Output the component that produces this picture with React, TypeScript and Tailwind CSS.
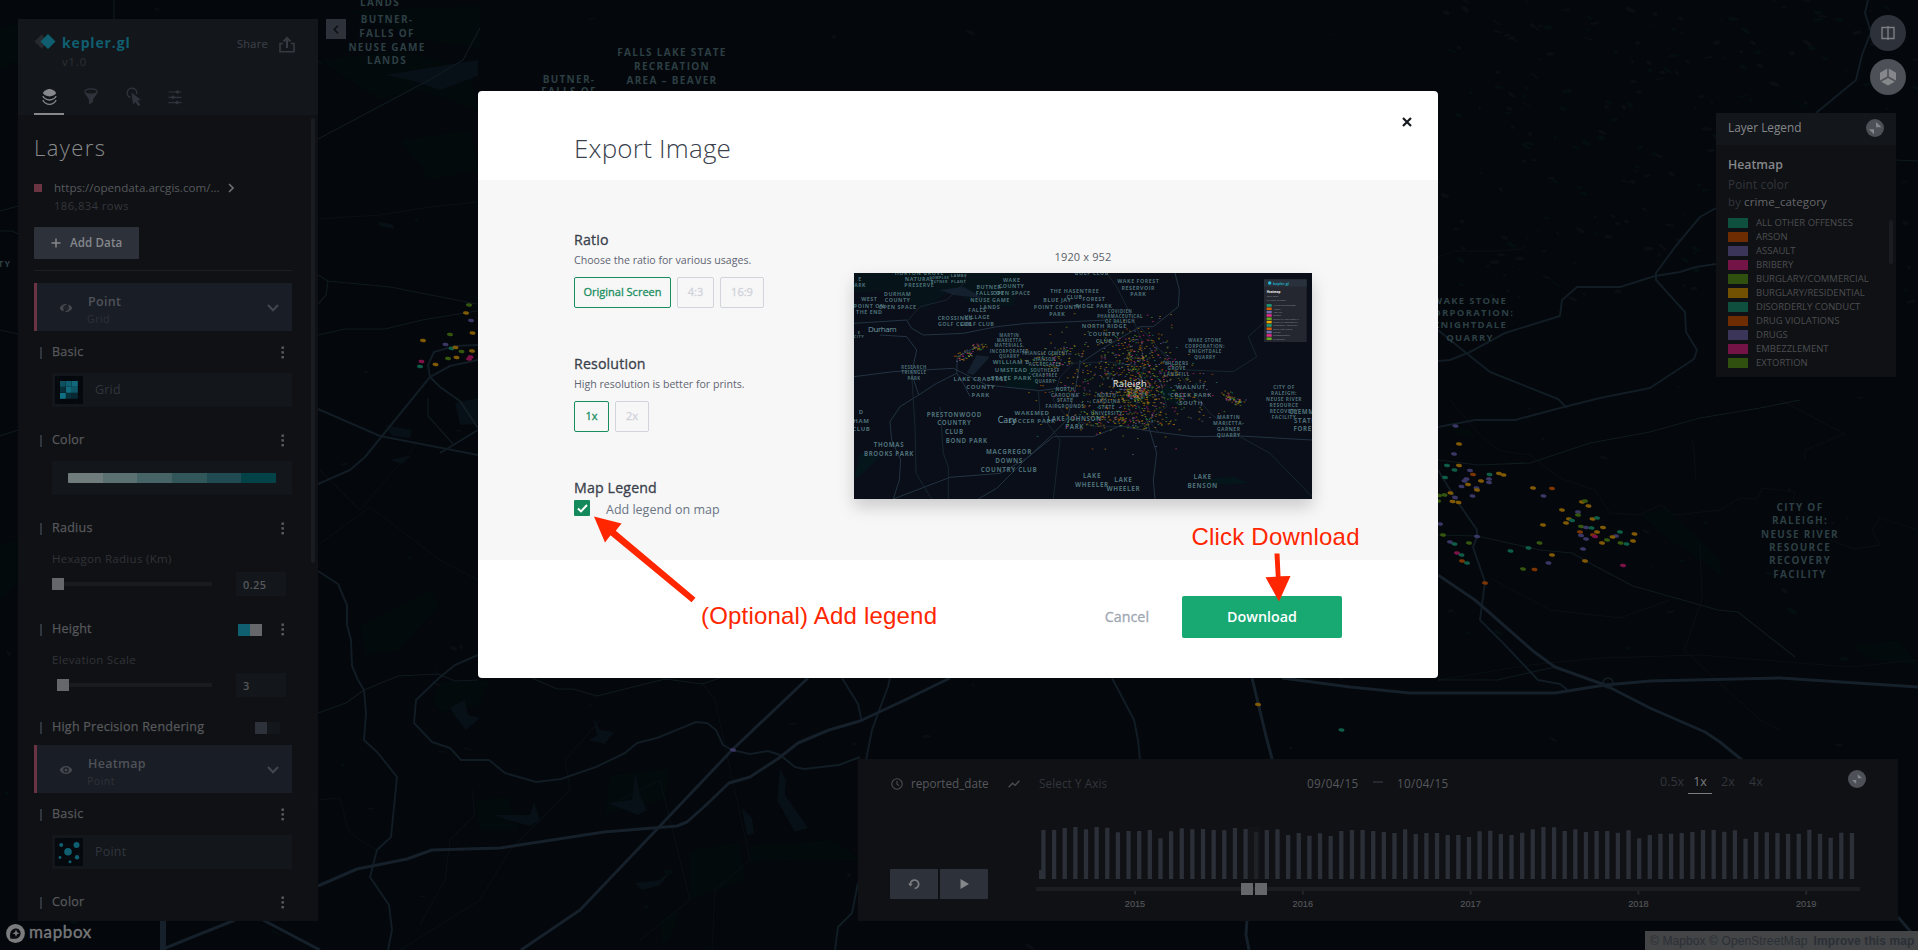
import React from "react";

const GREEN = "#0f5c47";
const ORANGE = "#7a3503";
const PURPLE = "#3a3765";
const PINK = "#7d1249";
const LIME = "#34560f";
const AMBER = "#7f5903";

/* ---------- Map ---------- */

const majorRoads = [
  "318,886 357,869 407,859 432,850 500,848 604,832 677,826 687,822 705,806 729,783 750,777 779,758 798,743 829,730 860,721 905,700 950,678",
  "808,678 732,750 659,827 580,910 521,950",
  "235,920 163,949",
  "263,920 320,950",
  "1252,678 1267,740 1273,762",
  "1247,920 1246,935 1249,950",
  "1282,678 1350,687 1410,693 1555,693 1605,685 1650,681 1780,678 1918,687",
  "1438,575 1475,600 1500,622 1533,651 1555,667 1605,685 1650,708 1705,732 1720,742 1742,760",
  "1898,917 1918,940",
];
const midRoads = [
  "358,680 364,690 366,713 364,740 378,753 397,777 391,837 377,850 370,877 389,905 392,930 388,950",
  "478,655 455,665 439,678 416,700 414,723 432,742 450,748 461,760 489,760 505,773 536,782 561,779 596,767 625,753 637,743 657,738 696,722 707,723 716,730 723,745 732,750 750,754 768,751 780,755 795,767 804,769 839,765 860,757",
  "318,409 380,436 478,455",
  "318,484 350,470 365,457 430,377 450,366 478,360",
  "430,377 428,365 434,352 455,346 478,345",
  "430,377 440,387 460,401 478,428",
  "478,430 440,453",
  "318,571 338,584 347,605 347,625 351,640 352,666 358,680",
  "842,678 858,704 862,722",
  "890,678 888,687 883,700 872,730 866,760",
  "1112,678 1134,720 1138,740 1140,760",
  "1438,427 1475,420 1515,420 1560,408 1600,398 1650,388 1694,359 1697,350 1686,332 1685,312 1656,280 1656,273 1675,247 1700,217 1716,208",
  "1438,361 1450,360 1470,352 1505,333 1560,316 1562,300 1577,287 1620,287 1655,276 1680,272 1696,267 1716,264",
  "1438,330 1465,352 1490,372 1558,399 1567,408",
  "1868,0 1865,13 1871,32 1862,55 1856,80 1816,113",
  "858,883 852,913 838,927 835,950",
  "1438,470 1455,498 1477,530 1477,537 1473,547 1485,582 1480,620 1505,645 1538,680 1560,684 1570,692",
];
const thinRoads = [
  "114,0 114,19",
  "0,211 18,206",
  "0,231 12,231 18,234",
  "0,330 18,334",
  "0,436 18,430",
  "318,139 433,78 463,60 480,28",
  "318,275 328,281 390,287 477,304",
  "328,281 326,295 318,304",
  "318,335 345,329 385,329 422,320 477,311",
  "318,713 346,703 364,690 398,676 438,674 455,681 478,680",
  "532,678 557,689 573,689 597,696 665,679 702,684 720,678",
  "428,398 428,416 453,444",
  "1438,460 1478,465 1530,463 1590,443 1650,432 1700,418 1760,408 1800,400",
  "1438,535 1477,536 1540,550 1572,553 1595,566 1633,586 1718,610 1738,612 1795,657",
  "1438,680 1497,680 1555,667",
  "1896,160 1918,161",
];
const faintRoads = [
  "318,219 380,215 430,207 477,202",
  "1438,257 1455,251 1500,251 1520,249 1526,246",
  "1450,400 1480,435 1500,451 1530,455 1560,478 1595,490 1610,513 1640,515 1660,505 1675,515 1720,510 1740,498 1757,499 1762,488 1795,492 1793,500 1830,540 1855,549 1880,545 1872,530 1880,518 1918,530",
  "1490,578 1550,610 1620,618 1670,600",
  "1438,680 1530,665 1600,658 1700,655 1850,667 1918,660",
  "1696,480 1694,450 1692,440",
  "1700,545 1702,600 1684,650 1760,720 1780,730",
  "1805,460 1805,450 1845,434 1780,400",
  "318,800 340,798 348,830 360,840 377,850",
  "620,800 660,780 690,900 640,940",
  "472,790 475,815 450,840 445,880 420,925",
  "600,720 565,760 570,790 510,850 480,900 400,950",
  "318,545 370,507 440,560 478,580",
  "320,470 360,510 420,440",
  "700,680 715,700 750,860 715,890 712,950",
];

const parks = [
  "318,60 400,50 470,70 478,110 420,90 380,100",
  "400,140 470,130 478,170 430,180",
  "350,10 480,6 480,48 420,40",
  "440,682 490,680 480,705 440,712 432,700",
  "610,775 670,768 665,800 605,815",
  "475,800 508,797 520,830 480,830",
  "690,850 740,842 745,880 690,900",
  "750,845 835,840 860,860 750,862",
  "0,545 18,540 18,585 0,600",
  "1640,515 1665,508 1690,530 1720,560 1722,578 1700,560 1670,540",
  "1850,645 1900,640 1918,665 1870,660",
  "1440,420 1470,430 1480,438 1460,436",
  "0,30 18,22 18,60 0,70",
  "660,920 680,910 670,940 662,945",
  "360,625 430,590 440,605 400,650 365,655",
  "1790,100 1815,107 1800,108",
];

const lakes = [
  "385,75 440,66 478,60 478,76 440,90 410,80",
  "460,702 465,700 468,715 480,718 466,730 455,716 450,708",
  "593,716 600,730 614,732 605,744 588,740 597,736",
  "635,772 640,795 647,810 638,815 607,803 632,800",
  "493,815 530,815 534,802 540,820 530,826 508,820",
  "780,768 786,780 785,795 808,828 795,832 777,800",
  "742,808 752,818 754,834 747,835",
  "635,883 660,880 675,866 660,885 642,890",
  "378,222 392,224 395,229 380,226",
  "390,460 412,455 402,464",
  "385,425 412,430 410,438 392,436",
  "455,403 478,398 478,424 460,425",
];

function rng(seed: number) {
  let s = seed;
  return () => {
    s = (s * 1664525 + 1013904223) % 4294967296;
    return s / 4294967296;
  };
}

const speckRand = rng(42);
const specks = Array.from({ length: 420 }, () => {
  const upper = speckRand() < 0.62;
  return {
    x: upper ? 1438 + speckRand() * 480 : speckRand() * 1918,
    y: upper ? speckRand() * 300 : speckRand() * 950,
    w: 1.5 + speckRand() * 4,
    h: 0.7 + speckRand() * 1.6,
    g: speckRand() < 0.4,
  };
});

const dots: [number, number, string][] = [
  [1455.5, 426, PURPLE], [1459, 444, AMBER], [1454, 454, PURPLE], [1447, 465.5, GREEN], [1459, 465.5, AMBER],
  [1454.5, 470, GREEN], [1470, 470.5, PURPLE], [1473, 474.5, ORANGE], [1489.5, 474.5, GREEN], [1499, 473.5, AMBER],
  [1503.5, 475, AMBER], [1445, 477.5, GREEN], [1466.5, 479, PURPLE], [1464.5, 481, PURPLE], [1481, 481, AMBER],
  [1489, 479, PURPLE], [1489, 482.5, PURPLE], [1468, 484.5, AMBER], [1461.5, 486.5, PURPLE], [1476.5, 488, PURPLE],
  [1477, 490, AMBER], [1472.5, 496, PURPLE], [1450.5, 493, AMBER], [1444.5, 495, LIME], [1455, 497.5, PURPLE],
  [1452.5, 501.5, AMBER], [1458.5, 502.5, AMBER], [1439, 495.5, LIME], [1438, 501, LIME], [1533, 488, AMBER],
  [1552, 488.5, ORANGE], [1543.5, 496, PURPLE], [1582, 502, AMBER], [1585, 501, LIME], [1588.5, 506, AMBER],
  [1562, 510, AMBER], [1578, 512, PURPLE], [1578, 515, LIME], [1569, 519, AMBER], [1572, 520.5, GREEN],
  [1566, 523, AMBER], [1592.5, 519, AMBER], [1597, 518, GREEN], [1543, 525, AMBER], [1581, 526.5, LIME],
  [1586, 527.5, PURPLE], [1591.5, 528, GREEN], [1603, 527.5, AMBER], [1597, 532, AMBER], [1580, 532, ORANGE],
  [1581, 535.5, PURPLE], [1593, 535, ORANGE], [1595, 536.5, PINK], [1586, 539, PURPLE], [1620, 532, GREEN],
  [1634.5, 534, AMBER], [1616, 536, PURPLE], [1612.5, 537, AMBER], [1607, 540, LIME], [1602, 543, AMBER],
  [1620.5, 543, LIME], [1626.5, 544, GREEN], [1633, 541, AMBER], [1583, 549, PURPLE], [1440, 524, PURPLE],
  [1443, 535, LIME], [1477, 536.5, PURPLE], [1450, 542, PURPLE], [1454.5, 544, GREEN], [1469, 543, LIME],
  [1539.5, 543, LIME], [1528.5, 548, GREEN], [1510.5, 551, GREEN], [1552, 555, AMBER], [1548.5, 563, PURPLE],
  [1585, 561, AMBER], [1623, 565.5, PINK], [1457, 553, PINK], [1461.5, 555, GREEN], [1462, 561, ORANGE],
  [1467, 563, GREEN], [1523, 569, LIME], [1534.5, 569.5, ORANGE], [1485, 583, ORANGE],
  [1258, 704.5, AMBER], [1341.5, 730, GREEN], [733, 750, PURPLE],
  [469, 305, LIME], [466, 313, AMBER], [423, 340.5, AMBER], [450, 334.5, LIME], [472.5, 333, AMBER], [471, 320.5, PURPLE],
  [445.5, 344.5, PURPLE], [451.5, 348.5, GREEN], [455.5, 347.5, AMBER], [461.5, 351.5, LIME], [472, 351, AMBER],
  [421.5, 361.5, PINK], [420, 366.5, GREEN], [435.5, 364.5, AMBER], [448, 358.5, LIME], [456.5, 357.5, AMBER],
  [469, 359, PINK], [470.5, 357, PINK],
];

function Label({ x, y, lines, size = 10, gap = 13.5 }: { x: number; y: number; lines: string[]; size?: number; gap?: number }) {
  return (
    <text x={x} textAnchor="middle" fontSize={size} fontWeight={700} letterSpacing={1.3} fill="#2c3f44">
      {lines.map((l, i) => (
        <tspan key={i} x={x} y={y + i * gap}>{l}</tspan>
      ))}
    </text>
  );
}

function BaseMap() {
  return (
    <svg className="absolute inset-0 h-[950px] w-[1918px]" viewBox="0 0 1918 950">
      <rect width="1918" height="950" fill="#04070b" />
      {parks.map((p, i) => <polygon key={i} points={p} fill="#030a0c" />)}
      {lakes.map((p, i) => <polygon key={i} points={p} fill="#081017" />)}
      {specks.map((s, i) => (
        <ellipse key={i} cx={s.x} cy={s.y} rx={s.w} ry={s.h} fill={s.g ? "#040e10" : "#0a0e14"} transform={`rotate(${(i % 7) * 8 - 10} ${s.x} ${s.y})`} />
      ))}
      <g fill="none" strokeLinejoin="round">
        {faintRoads.map((p, i) => <polyline key={i} points={p} stroke="#091014" strokeWidth="1" />)}
        {thinRoads.map((p, i) => <polyline key={i} points={p} stroke="#0f1a20" strokeWidth="1.2" />)}
        {midRoads.map((p, i) => <polyline key={i} points={p} stroke="#111c24" strokeWidth="2" />)}
        {majorRoads.map((p, i) => <polyline key={i} points={p} stroke="#15202a" strokeWidth="3" />)}
        <polyline points="163,920 163,950" stroke="#15202a" strokeWidth="6" />
        <circle cx="1608" cy="683" r="5" stroke="#131e27" strokeWidth="1.6" />
      </g>
      {dots.map(([x, y, c], i) => <ellipse key={i} cx={x} cy={y} rx="3" ry="1.7" fill={c} transform={`rotate(10 ${x} ${y})`} />)}
      <g fontFamily="'Open Sans', 'Noto Sans', sans-serif">
        <Label x={380} y={6} lines={["LANDS"]} />
        <Label x={387} y={23} lines={["BUTNER-", "FALLS OF", "NEUSE GAME", "LANDS"]} gap={13.8} />
        <Label x={569} y={83} lines={["BUTNER-", "FALLS OF"]} gap={12} />
        <Label x={672} y={56} lines={["FALLS LAKE STATE", "RECREATION", "AREA – BEAVER"]} gap={13.8} />
        <Label x={1470} y={304} lines={["WAKE STONE", "CORPORATION:", "KNIGHTDALE", "QUARRY"]} gap={12.2} size={9.5} />
        <Label x={1800} y={511} lines={["CITY OF", "RALEIGH:", "NEUSE RIVER", "RESOURCE", "RECOVERY", "FACILITY"]} gap={13.3} />
        <Label x={-1} y={267} lines={["CITY"]} size={9} />
      </g>
    </svg>
  );
}

/* ---------- Sidebar ---------- */

function MoreDots() {
  return (
    <svg className="h-[13px] w-[3px]" viewBox="0 0 3 13" fill="#5b5d62">
      <rect x="0.5" y="0.5" width="2.4" height="2.4" />
      <rect x="0.5" y="5.2" width="2.4" height="2.4" />
      <rect x="0.5" y="10" width="2.4" height="2.4" />
    </svg>
  );
}

function SectionTitle({ title, children }: { title: string; children?: React.ReactNode }) {
  return (
    <div className="flex h-[42px] shrink-0 items-center pt-px pr-[8px] pl-[6px]">
      <div className="h-[12px] w-[2px] bg-[#30363e]" />
      <div className="ml-[10px] flex-1 text-[12.5px] tracking-[0.25px] text-[#56585c] [-webkit-text-stroke:0.25px_#56585c]">{title}</div>
      {children ?? <MoreDots />}
    </div>
  );
}

function LayerCard({ name, type, hidden }: { name: string; type: string; hidden?: boolean }) {
  return (
    <div className="flex h-[48px] shrink-0 items-center border-l-[3px] border-[#6b3442] bg-[#191d25] pr-[13px] pl-[22px]">
      <svg className="mt-px h-[14px] w-[14px]" viewBox="0 0 14 14" fill="#45484e">
        <path fillRule="evenodd" d="M7 3 C10 3 12.4 5 13.4 7 C12.4 9.2 10 11 7 11 C4 11 1.6 9.2 0.6 7 C1.6 5 4 3 7 3 Z M7 4.2 A2.8 2.8 0 1 0 7 9.8 A2.8 2.8 0 1 0 7 4.2 Z" />
        <circle cx="7" cy="7" r="1.5" />
        {hidden && <path d="M9.6 1.5 L4.4 12.5" stroke="#191d25" strokeWidth="1.8" />}
      </svg>
      <div className="ml-[14px] flex flex-1 flex-col pt-[6px]">
        <span className="h-[18px] pl-[1px] text-[12.5px] leading-[18px] font-semibold tracking-[0.3px] text-[#505259]">{name}</span>
        <span className="h-[17px] text-[10.5px] leading-[17px] tracking-[0.5px] text-[#2e323a]">{type}</span>
      </div>
      <svg className="mt-px h-[8px] w-[12px]" viewBox="0 0 12 8" fill="none" stroke="#434750" strokeWidth="2"><path d="M1 1 L6 6.3 L11 1" /></svg>
    </div>
  );
}

function GridIcon() {
  const c = ["#0d5161", "#0f5f70", "#12697c", "#08303b", "#12697c", "#0f5767", "#107083", "#08303b", "#082833"];
  return (
    <svg className="h-[28px] w-[28px]" viewBox="0 0 28 28">
      <rect width="28" height="28" fill="#05080c" />
      <path d="M3 0V28M0 21H28M22 0V28" stroke="#0a1015" strokeWidth="0.8" />
      {c.map((f, i) => <rect key={i} x={5 + (i % 3) * 6} y={5 + Math.floor(i / 3) * 6} width="5.8" height="5.8" fill={f} />)}
    </svg>
  );
}

function PointIcon() {
  return (
    <svg className="h-[28px] w-[28px]" viewBox="0 0 28 28">
      <rect width="28" height="28" fill="#05080c" />
      <path d="M3 0V28M0 20H28M24 0V28M0 7H28" stroke="#0b1117" strokeWidth="0.8" />
      <g fill="#0f5f70">
        <circle cx="13" cy="13.8" r="3.8" />
        <circle cx="21.5" cy="7" r="3" />
        <circle cx="6.2" cy="7" r="2" />
        <circle cx="22" cy="19.2" r="2.2" />
        <circle cx="5" cy="19.5" r="1.4" />
        <circle cx="15" cy="23.7" r="1.5" />
      </g>
    </svg>
  );
}

function TypeBox({ icon, label }: { icon: React.ReactNode; label: string }) {
  return (
    <div className="mb-[12px] ml-[18px] flex h-[34px] shrink-0 items-center rounded-[1px] bg-[#13161a] pl-[3px]">
      {icon}
      <span className="ml-[12px] text-[12.5px] tracking-[0.2px] text-[#31353d]">{label}</span>
    </div>
  );
}

function SliderRow({ label, value, atStart }: { label: string; value: string; atStart?: boolean }) {
  return (
    <div className="mb-[12px] ml-[18px] flex shrink-0 flex-col gap-[3px]">
      <div className="h-[20px] text-[11.5px] leading-[20px] tracking-[0.3px] text-[#303339]">{label}</div>
      <div className="flex h-[24px] items-center">
        <div className="flex w-[160px] items-center">
          {!atStart && <div className="w-[5px]" />}
          <div className="h-[12px] w-[12px] bg-[#65676b]" />
          <div className="h-[4px] flex-1 bg-[#191b1f]" />
        </div>
        <div className="ml-[24px] flex h-[24px] w-[50px] items-center rounded-[1px] bg-[#13161a] pt-[2px] pl-[7px] text-[11px] font-semibold tracking-[0.4px] text-[#56585c]">{value}</div>
      </div>
    </div>
  );
}

function Sidebar() {
  return (
    <aside className="mt-[19px] ml-[18px] flex h-[902px] w-[300px] shrink-0 flex-col overflow-hidden bg-[#101114]">
      <header className="flex h-[96px] shrink-0 flex-col bg-[#13161a] px-[16px]">
        <div className="flex h-[64px] pt-[9px]">
          <svg className="mt-[6px] h-[16px] w-[22px]" viewBox="0 0 22 16">
            <path d="M7.5 0.5 L14.5 7.5 L7.5 14.5 L0.5 7.5 Z" fill="#26292e" />
            <path d="M14 0 L21.5 7.5 L14 15 L6.5 7.5 Z" fill="#0f5f70" />
          </svg>
          <div className="ml-[6px] flex-1">
            <div className="h-[27px] pt-px text-[14px] leading-[27px] font-bold tracking-[0.85px] text-[#0f5f70]">kepler.gl</div>
            <div className="h-[14px] text-[11px] leading-[14px] tracking-[1px] text-[#2f3237]">v1.0</div>
          </div>
          <span className="mt-[6px] h-[20px] text-[11px] leading-[20px] tracking-[0.3px] text-[#3a3e46] [-webkit-text-stroke:0.2px_#3a3e46]">Share</span>
          <svg className="mt-[8px] mr-[7px] ml-[11px] h-[17px] w-[16px]" viewBox="0 0 16 17" fill="none" stroke="#363a42" strokeWidth="1.6">
            <path d="M4 7.5 H1 V15.8 H15 V7.5 H12" />
            <path d="M8 12 V2.5" strokeWidth="2" />
            <path d="M4.5 5.5 L8 2 L11.5 5.5" strokeWidth="2" />
          </svg>
        </div>
        <nav className="flex h-[32px]">
          <div className="flex w-[30px] items-start justify-center border-b-2 border-[#85878a]">
            <svg className="mt-[5px] h-[18px] w-[15px]" viewBox="0 0 15 18">
              <path d="M7.5 1 C10 1 14 3.5 14 5 C14 6.5 10 8.4 7.5 8.4 C5 8.4 1 6.5 1 5 C1 3.5 5 1 7.5 1Z" fill="#85878a" />
              <path d="M1 8 C1 10 5 12 7.5 12 C10 12 14 10 14 8" fill="none" stroke="#85878a" strokeWidth="1.3" />
              <path d="M1 12 C1 14 5 16.4 7.5 16.4 C10 16.4 14 14 14 12" fill="none" stroke="#85878a" strokeWidth="1.3" />
            </svg>
          </div>
          <svg className="mt-[5px] ml-[20px] h-[17px] w-[14px]" viewBox="0 0 14 17">
            <ellipse cx="7" cy="3.5" rx="6.2" ry="2.6" fill="none" stroke="#2f343c" strokeWidth="1.3" />
            <path d="M0.4 4.5 C1 6 5 11 5 12 V16.5 L9 14 V12 C9 11 13 6 13.6 4.5 C11 7 3 7 0.4 4.5Z" fill="#2f343c" />
          </svg>
          <svg className="mt-[4px] ml-[28px] h-[20px] w-[16px]" viewBox="0 0 16 20">
            <path d="M4.5 10.5 A4.8 4.8 0 1 1 10.6 7" fill="none" stroke="#2f343c" strokeWidth="1.4" />
            <path d="M5.5 5.5 L15 13 L11.5 13.5 L14.5 18 L12 19 L9.5 15 L7 17.5 Z" fill="#2f343c" />
          </svg>
          <svg className="mt-[6px] ml-[26px] h-[16px] w-[14px]" viewBox="0 0 14 16" stroke="#2f343c" fill="#2f343c">
            <path d="M0.5 3 H13.5 M0.5 8.3 H13.5 M0.5 13.6 H13.5" strokeWidth="1.2" />
            <circle cx="9.5" cy="3" r="1.3" /><circle cx="5" cy="8.3" r="1.3" /><circle cx="9" cy="13.6" r="1.3" />
          </svg>
        </nav>
      </header>
      <div className="flex min-h-0 flex-1">
        <div className="flex min-w-0 flex-1 flex-col pl-[16px]">
          <div className="flex h-[64px] shrink-0 items-center pt-px text-[22px] font-light tracking-[1.4px] text-[#898b8e]">Layers</div>
          <div className="flex h-[18px] shrink-0 items-center">
            <div className="h-[8px] w-[8px] bg-[#6b3442]" />
            <span className="ml-[12px] w-[166px] text-[11.6px] whitespace-nowrap text-[#56595e]">https://opendata.arcgis.com/…</span>
            <svg className="ml-[8px] h-[10px] w-[6px]" viewBox="0 0 6 10" fill="none" stroke="#6c6e72" strokeWidth="1.6"><path d="M1 1 L5 5 L1 9" /></svg>
          </div>
          <div className="h-[18px] shrink-0 pl-[20px] text-[11.3px] leading-[18px] tracking-[0.4px] text-[#33363c]">186,834 rows</div>
          <button className="mt-[12px] flex h-[32px] w-[105px] shrink-0 items-center rounded-[1px] bg-[#2d313a] pl-[17px] text-[11.6px] font-semibold tracking-[0.1px] text-[#85878a]">
            <svg className="mr-[9px] h-[10px] w-[10px]" viewBox="0 0 10 10" stroke="#85878a" strokeWidth="1.5"><path d="M0.5 5 H9.5 M5 0.5 V9.5" /></svg>
            Add Data
          </button>
          <div className="mt-[11px] mb-[12px] h-px shrink-0 bg-[#1b1e23]" />
          <LayerCard name="Point" type="Grid" hidden />
          <SectionTitle title="Basic" />
          <TypeBox icon={<GridIcon />} label="Grid" />
          <SectionTitle title="Color" />
          <div className="mb-[12px] ml-[18px] flex h-[34px] shrink-0 items-center bg-[#13161a] px-[16px]">
            <div className="flex h-[10px] flex-1 overflow-hidden rounded-[1px]">
              <div className="flex-1 bg-[#6f7c7b]" />
              <div className="flex-1 bg-[#5a7071]" />
              <div className="flex-1 bg-[#466365]" />
              <div className="flex-1 bg-[#32575b]" />
              <div className="flex-1 bg-[#204b52]" />
              <div className="flex-1 bg-[#034347]" />
            </div>
          </div>
          <SectionTitle title="Radius" />
          <SliderRow label="Hexagon Radius (Km)" value="0.25" atStart />
          <SectionTitle title="Height">
            <div className="mr-[19px] flex">
              <div className="h-[12px] w-[12px] bg-[#0f5f70]" />
              <div className="h-[12px] w-[12px] bg-[#65676b]" />
            </div>
            <MoreDots />
          </SectionTitle>
          <SliderRow label="Elevation Scale" value="3" />
          <div className="-mb-[3px] flex shrink-0 flex-col">
            <div className="-mt-[3px]">
              <SectionTitle title="High Precision Rendering">
                <div className="mr-[4px] flex bg-[#13161a]">
                  <div className="h-[12px] w-[12px] bg-[#2d313a]" />
                  <div className="h-[12px] w-[13px]" />
                </div>
              </SectionTitle>
            </div>
          </div>
          <LayerCard name="Heatmap" type="Point" />
          <SectionTitle title="Basic" />
          <TypeBox icon={<PointIcon />} label="Point" />
          <SectionTitle title="Color" />
        </div>
        <div className="flex w-[26px] shrink-0 justify-end pt-[3px] pr-[3px]">
          <div className="h-[445px] w-[4px] rounded-full bg-[#191d22]" />
        </div>
      </div>
    </aside>
  );
}

/* ---------- Legend ---------- */

const legend: [string, string][] = [
  ["ALL OTHER OFFENSES", "#0e4f3d"], ["ARSON", "#6d2c02"], ["ASSAULT", "#3a3559"], ["BRIBERY", "#741346"],
  ["BURGLARY/COMMERCIAL", "#30500f"], ["BURGLARY/RESIDENTIAL", "#735102"], ["DISORDERLY CONDUCT", "#0e4f3d"],
  ["DRUG VIOLATIONS", "#6d2c02"], ["DRUGS", "#3a3559"], ["EMBEZZLEMENT", "#741346"], ["EXTORTION", "#30500f"],
];

function MinimizeIcon({ small }: { small?: boolean }) {
  return (
    <svg className="h-[18px] w-[18px]" viewBox="0 0 18 18">
      <circle cx="9" cy="9" r="9" fill="#4d5057" />
      <g fill="#85878a" transform={small ? "translate(9 9) scale(0.8) translate(-9 -9)" : undefined}>
        <path d="M10 3 L15.5 8.2 H10 Z" />
        <path d="M8 15.3 L2.8 10.3 H8 Z" />
      </g>
    </svg>
  );
}

function RightColumn() {
  return (
    <div className="flex w-[202px] flex-col">
      <div className="flex flex-col items-end gap-[8px] pt-[15px] pr-[12px]">
        <div className="flex h-[36px] w-[36px] items-center justify-center rounded-full bg-[#2d313a]">
          <svg className="h-[14px] w-[14px]" viewBox="0 0 14 14" fill="none" stroke="#7c7e82" strokeWidth="1.4"><path d="M1 1.5 H13 V12.5 H1 Z M7 0 V14" /></svg>
        </div>
        <div className="flex h-[36px] w-[36px] items-center justify-center rounded-full bg-[#4d5057]">
          <svg className="h-[18px] w-[18px]" viewBox="0 0 18 18" fill="#85878a">
            <path d="M1 4.8 L8.2 0.6 V8.6 L1 12.6 Z" /><path d="M17 4.8 L9.8 0.6 V8.6 L17 12.6 Z" /><path d="M9 10 L15.8 13.8 L9 17.6 L2.2 13.8 Z" />
          </svg>
        </div>
      </div>
      <div className="mt-[18px] flex h-[264px] w-[180px] flex-col bg-[#101114]">
        <div className="flex h-[32px] items-center justify-between bg-[#13161a] px-[12px] text-[11.8px] text-[#85878a]">
          <span className="pb-[2px]">Layer Legend</span>
          <div className="-mt-[2px]"><MinimizeIcon /></div>
        </div>
        <div className="flex flex-1 justify-between pr-[3px] pl-[12px]">
          <div className="flex flex-col pt-[10px]">
            <div className="h-[19px] text-[12.3px] leading-[19px] font-semibold text-[#85878a]">Heatmap</div>
            <div className="h-[19px] text-[11.7px] leading-[20px] tracking-[0.2px] text-[#31353d]">Point color</div>
            <div className="mb-[5px] h-[18px] text-[11.5px] leading-[18px] tracking-[0.1px] text-[#31353d]">by <span className="text-[#65676b]">crime_category</span></div>
            {legend.map(([name, color], i) => (
              <div key={i} className="flex h-[14px] items-center">
                <div className="h-[10px] w-[20px]" style={{ backgroundColor: color }} />
                <span className="ml-[8px] text-[9.5px] leading-[14px] whitespace-nowrap text-[#4b4d51]">{name}</span>
              </div>
            ))}
          </div>
          <div className="mt-[75px] h-[44px] w-[4px] rounded-full bg-[#191d22]" />
        </div>
      </div>
    </div>
  );
}

/* ---------- Time widget ---------- */

const barTops = [
  830, 830, 828, 827, 829.3, 827, 827.7, 832.3, 831, 831, 830, 838.3, 831.3, 828.3, 829.3, 829, 830, 830.3, 828, 829, 832, 830,
  829.3, 835, 833, 835.7, 833.3, 836, 831, 830, 830, 831,
  832, 833, 829.3, 834, 833, 833, 835, 835, 837, 831.3, 830.7, 834, 835, 832.7, 829.3, 827, 827.3, 831, 829.3, 832, 831, 831,
  832.7, 830.3, 838.3, 835, 833.7, 833.7, 833, 832, 830, 830, 831.7, 830.3, 838.7, 832, 832.3, 833, 833.7, 833.7, 829.7, 833.7,
  837.7, 832.7, 833,
];
const years = ["2015", "2016", "2017", "2018", "2019"];

function TimeWidget() {
  return (
    <section className="flex h-[162px] w-[1040px] flex-col bg-[#101114] pl-[32px]">
      <div className="flex h-[48px] items-center pt-px pl-px text-[11.7px] text-[#56585d]">
        <svg className="h-[12px] w-[12px]" viewBox="0 0 12 12" fill="none" stroke="#4b4d52" strokeWidth="1.1"><circle cx="6" cy="6" r="5.2" /><path d="M6 3 V6.3 L8.2 7.6" /></svg>
        <span className="ml-[8px] w-[97px]">reported_date</span>
        <svg className="h-[8px] w-[12px]" viewBox="0 0 12 8" fill="none" stroke="#4b4d52" strokeWidth="1.4"><path d="M0.6 7.2 L4.5 3.2 L7 5.4 L11.4 0.8" /></svg>
        <span className="ml-[19px] w-[268px] tracking-[0.1px] text-[#31353d]">Select Y Axis</span>
        <span className="w-[66px] tracking-[0.35px]">09/04/15</span>
        <div className="-mt-[4px] h-[2px] w-[10px] bg-[#25292f]" />
        <span className="ml-[14px] w-[263px] tracking-[0.35px]">10/04/15</span>
        <div className="-mt-[4px] flex text-[12.5px] text-[#31353d]">
          <span className="w-[28px] leading-[23px]">0.5x</span>
          <span className="w-[24px] border-b border-[#7a7c80] text-center leading-[23px] text-[#7a7c80]">1x</span>
          <span className="ml-[9px] w-[28px] leading-[23px]">2x</span>
          <span className="w-[27px] leading-[23px]">4x</span>
        </div>
        <div className="-mt-[10px] ml-[72px]"><MinimizeIcon small /></div>
      </div>
      <div className="flex flex-1">
        <div className="flex gap-[2px] pt-[62px]">
          <button className="flex h-[30px] w-[48px] items-center justify-center rounded-l-[1px] bg-[#2d313a]">
            <svg className="h-[12px] w-[12px]" viewBox="0 0 12 12" fill="none" stroke="#7c7e82" strokeWidth="1.7"><path d="M2.4 7.2 A4.2 4.2 0 1 1 6.6 10.4" /><path d="M0.2 5.6 L2.4 8.6 L4.8 5.8 Z" fill="#7c7e82" stroke="none" /></svg>
          </button>
          <button className="flex h-[30px] w-[48px] items-center justify-center rounded-r-[1px] bg-[#2d313a]">
            <svg className="h-[10px] w-[9px]" viewBox="0 0 9 10" fill="#85878a"><path d="M0.5 0 L9 5 L0.5 10 Z" /></svg>
          </button>
        </div>
        <svg className="ml-[42px] h-[114px] w-[840px]" viewBox="1030 807 840 114">
          <rect x="1247" y="827" width="13" height="52" fill="#121417" />
          {barTops.map((t, i) => (
            <rect key={i} x={1041.3 + i * 10.638} y={t} width="4.3" height={879 - t} fill={i === 20 ? "#1e2226" : "#2b3038"} rx="0.6" />
          ))}
          <rect x="1039" y="870" width="4" height="9" fill="#2b3038" />
          <rect x="1036" y="887" width="824" height="4" fill="#1b1d20" />
          <rect x="1241" y="883" width="12" height="12" fill="#65676b" />
          <rect x="1255" y="883" width="12" height="12" fill="#65676b" />
          {years.map((y, i) => (
            <g key={y}>
              <rect x={1134 + i * 167.8} y="891" width="2" height="3.5" fill="#23262a" />
              <text x={1135 + i * 167.8} y="907.2" textAnchor="middle" fontSize="9.2" fontFamily="'Liberation Sans', Arial, sans-serif" stroke="#54565a" strokeWidth="0.15" fill="#54565a">{y}</text>
            </g>
          ))}
        </svg>
      </div>
    </section>
  );
}

/* ---------- Export preview ---------- */

const previewLabels: [number, number, number, string[], number][] = [
  [60, 123, 15, ["E", "ARK"], 19],
  [88, 182, 16, ["WEST", "POINT ON", "THE END"], 20.5],
  [173, 167, 16, ["DURHAM", "COUNTY", "OPEN SPACE"], 20],
  [238, 104, 16, ["HORTON GROVE", "NATURAL", "PRESERVE"], 19],
  [298, 116, 11, ["COMPLEX", "BUTNER"], 14],
  [356, 112, 12, ["LAMBS", "PLANT"], 16],
  [450, 146, 16, ["BUTNER-", "FALLS OF", "NEUSE GAME", "LANDS"], 20],
  [515, 125, 16, ["WAKE", "COUNTY", "OPEN SPACE"], 19.5],
  [412, 216, 16, ["FALLS", "VILLAGE", "GOLF CLUB"], 21],
  [345, 239, 16, ["CROSSINGS", "GOLF CLUB"], 20],
  [755, 105, 16, ["GOLF CLUB"], 19],
  [704, 158, 16, ["THE HASENTREE", "CLUB"], 20],
  [652, 187, 16, ["BLUE JAY", "POINT COUNTY", "PARK"], 20],
  [762, 183, 16, ["FOREST", "RIDGE PARK"], 20],
  [895, 129, 16, ["WAKE FOREST", "RESERVOIR", "PARK"], 19.5],
  [840, 218, 13, ["COVIDIEN", "PHARMACEUTICAL", "OF RALEIGH"], 15],
  [793, 265, 17, ["NORTH RIDGE", "COUNTRY", "CLUB"], 22],
  [508, 290, 13, ["MARTIN", "MARIETTA", "MATERIALS,", "INCORPORATED", "QUARRY"], 16],
  [615, 346, 13, ["TRIANGLE CEMENT", "HANSON", "AGGREGATES", "SOUTHEAST", "CRABTREE", "QUARRY"], 16.5],
  [514, 373, 18, ["WILLIAM B", "UMSTEAD", "STATE PARK"], 23],
  [422, 423, 18, ["LAKE CRABTREE", "COUNTY", "PARK"], 24],
  [222, 386, 13, ["RESEARCH", "TRIANGLE", "PARK"], 17],
  [57, 281, 12, ["E", "CITY"], 14],
  [1095, 307, 13.5, ["WAKE STONE", "CORPORATION:", "KNIGHTDALE", "QUARRY"], 16.5],
  [1010, 374, 14, ["WILDERS", "GROVE", "LANDFILL"], 17],
  [1053, 448, 18, ["WALNUT", "CREEK PARK", "SOUTH"], 24],
  [675, 452, 14, ["NORTH", "CAROLINA", "STATE", "FAIRGROUNDS"], 17.5],
  [800, 472, 14, ["NORTH", "CAROLINA", "STATE", "UNIVERSITY"], 18],
  [576, 525, 18, ["WAKEMED", "SOCCER PARK"], 25],
  [704, 543, 18.5, ["LAKE JOHNSON", "PARK"], 25],
  [343, 530, 18.5, ["PRESTONWOOD", "COUNTRY", "CLUB"], 25.5],
  [380, 608, 18.5, ["BOND PARK"], 25],
  [147, 622, 18.5, ["THOMAS", "BROOKS PARK"], 26],
  [64, 523, 18, ["D", "HAM", "CLUB"], 25],
  [507, 643, 19, ["MACGREGOR", "DOWNS", "COUNTRY CLUB"], 26.5],
  [756, 713, 19, ["LAKE", "WHEELER"], 27],
  [850, 727, 19, ["LAKE", "WHEELER"], 27],
  [1088, 717, 19, ["LAKE", "BENSON"], 27],
  [1166, 536, 15, ["MARTIN", "MARIETTA-", "GARNER", "QUARRY"], 18.5],
  [1332, 446, 14.5, ["CITY OF", "RALEIGH:", "NEUSE RIVER", "RESOURCE", "RECOVERY", "FACILITY"], 18],
  [1394, 523, 18.5, ["CLEMMO", "STATE", "FORES"], 25],
];

const previewRoads = [
  "42,250 200,240 215,265 250,285 370,280 470,260 560,250 700,245 800,240",
  "120,285 200,290 230,330 215,400 236,465 180,500 150,545 155,600 182,660 178,720 160,777",
  "236,465 290,430 350,400 352,350 430,310",
  "160,777 330,712 480,700 560,655 620,600 680,540 705,450 720,370 780,330 900,260 940,260 1015,200 1018,150 1005,99",
  "42,410 160,395 340,385 440,435 600,452 690,440",
  "415,777 470,745 560,655 640,590 760,590 840,558 940,575 1060,590 1200,588 1416,600",
  "920,540 950,640 940,720 945,777",
  "350,400 370,430 390,470",
  "595,450 600,520 660,600 640,777",
  "205,240 240,200 320,180 372,130 380,99",
  "800,99 830,140 880,240 905,300 910,400 880,470 905,520 960,580",
  "640,480 660,410 700,370 800,365 900,380 960,420 980,500 900,560 760,560 680,530 640,480",
  "900,260 960,330 1040,390 1180,395 1250,350 1225,290 1280,240 1300,200",
  "960,330 1040,430 1110,520 1200,590 1290,640 1416,770",
  "215,400 225,560 228,700 275,777",
  "300,500 310,640 325,680 325,777",
];

function cluster(seed: number, n: number, cx: number, cy: number, sx: number, sy: number) {
  const r = rng(seed);
  const colors = ["#c98f09", "#c98f09", "#c98f09", "#1b9e77", "#7570b3", "#7570b3", "#66a61e", "#66a61e", "#d95f02", "#e7298a"];
  return Array.from({ length: n }, () => {
    const gx = r() + r() + r() - 1.5;
    const gy = r() + r() + r() - 1.5;
    return { x: cx + gx * sx, y: cy + gy * sy, c: colors[Math.floor(r() * colors.length)] };
  });
}

const previewDots = [
  ...cluster(7, 330, 830, 420, 210, 165),
  ...cluster(11, 240, 890, 440, 90, 110),
  ...cluster(12, 150, 885, 460, 40, 26),
  ...cluster(19, 140, 900, 330, 110, 90),
  ...cluster(23, 150, 850, 540, 190, 26),
  ...cluster(29, 110, 1020, 450, 110, 80),
  ...cluster(31, 70, 640, 350, 90, 40),
  ...cluster(37, 30, 1165, 470, 26, 16),
  ...cluster(39, 30, 1195, 482, 26, 10),
  ...cluster(43, 20, 362, 352, 20, 12),
  ...cluster(44, 20, 385, 338, 20, 12),
  ...cluster(47, 24, 412, 322, 22, 12),
];

function Preview() {
  return (
    <svg className="h-[226px] w-[458px] shadow-[0_8px_16px_0_rgba(0,0,0,0.18)]" viewBox="42 99 1374 678" preserveAspectRatio="none">
      <rect x="42" y="99" width="1374" height="678" fill="#0a0e18" />
      <g fill="#04161a">
        <path d="M42 99 H540 L520 200 L400 190 L330 150 L250 210 L150 150 L42 160Z" opacity="0.7" />
        <path d="M470 360 L600 380 L590 450 L500 440Z" />
        <path d="M60 640 L120 650 L80 690 L42 720Z" />
        <path d="M1080 720 L1180 710 L1230 730 L1100 735Z" />
        <path d="M980 430 L1040 480 L1020 500 L960 470Z" />
      </g>
      <path d="M300 150 L370 140 L430 175 L340 165Z M380 400 L410 345 L450 350 L400 405Z M800 390 L815 400 L805 420Z" fill="#14202e" />
      <g fill="none" strokeWidth="3" strokeLinejoin="round">
        {previewRoads.map((p, i) => <polyline key={i} points={p} stroke={i < 8 ? "#223443" : "#182531"} />)}
      </g>
      <g fontFamily="'Open Sans', 'Noto Sans', sans-serif" fontWeight={700} fill="#5f8890" fillOpacity="0.8">
        {previewLabels.map(([x, y, s, lines, gap], i) => (
          <text key={i} textAnchor="middle" fontSize={s} letterSpacing={s * 0.1}>
            {lines.map((l, j) => <tspan key={j} x={x} y={y + j * gap}>{l}</tspan>)}
          </text>
        ))}
      </g>
      {previewDots.map((d, i) => <rect key={i} x={d.x} y={d.y} width="5" height="2.6" fill={d.c} fillOpacity="0.68" />)}
      <g fontFamily="'Open Sans', 'Noto Sans', sans-serif">
        <text x="84" y="276" fontSize="24" textLength="86" fill="#6f9aa4">Durham</text>
        <text x="473" y="550" fontSize="26" textLength="56" fill="#7ba3ad">Cary</text>
        <text x="818" y="442" fontSize="28" textLength="102" fill="#e3e8ea">Raleigh</text>
      </g>
      <rect x="1272" y="118" width="128" height="188" fill="#242730" />
      <rect x="1272" y="118" width="128" height="22" fill="#29323c" />
      <circle cx="1289" cy="129" r="5" fill="#1fbad6" />
      <g fontFamily="'Open Sans', 'Noto Sans', sans-serif" fill="#8b8f98" fontSize="7">
        <text x="1299" y="134" fontSize="11" fontWeight="700" fill="#1fa6c0">kepler.gl</text>
        <text x="1280" y="158" fontSize="9" fontWeight="700" fill="#f0f0f0">Heatmap</text>
        <text x="1280" y="171">Point color</text>
        <text x="1280" y="184">by crime_category</text>
        {legend.map(([name], i) => (
          <g key={i}>
            <rect x="1280" y={192.5 + i * 10} width="15" height="7.5" fill={["#1b9e77", "#d95f02", "#7570b3", "#e7298a", "#66a61e", "#e6ab02"][i % 6]} />
            <text x="1300" y={198.5 + i * 10} fontSize="6.5">{name}</text>
          </g>
        ))}
      </g>
    </svg>
  );
}

/* ---------- Dialog ---------- */

function Choice({ label, selected, className }: { label: string; selected?: boolean; className: string }) {
  return (
    <button className={`${selected ? "border-[#188e60] text-[#188e60] [-webkit-text-stroke:0.3px_#188e60]" : "border-[#d2d4dc] text-[#d0d2da] [-webkit-text-stroke:0.3px_#d0d2da]"} flex h-[31px] items-center justify-center rounded-[2px] border bg-transparent text-[11px] ${className}`}>
      {label}
    </button>
  );
}

function FieldTitle({ children }: { children: React.ReactNode }) {
  return <div className="h-[21px] text-[14.2px] leading-[21px] tracking-[0.15px] text-[#3a414c] [-webkit-text-stroke:0.3px_#3a414c]">{children}</div>;
}

function ExportDialog() {
  return (
    <div className="flex h-[587px] w-[960px] flex-col overflow-hidden rounded-[4px] bg-white">
      <div className="flex h-[89px] shrink-0 justify-between pr-[26px] pl-[96px]">
        <h1 className="pt-[37px] text-[26px] leading-[40px] font-light tracking-[0.2px] text-[#3a414c]">Export Image</h1>
        <svg className="mt-[26px] h-[10px] w-[10px]" viewBox="0 0 10 10" stroke="#15181d" strokeWidth="2.2"><path d="M1 1 L9 9 M9 1 L1 9" /></svg>
      </div>
      <div className="flex h-[380px] shrink-0 justify-between bg-[#f7f7f7] pr-[126px] pl-[96px]">
        <div className="flex flex-col pt-[49px]">
          <FieldTitle>Ratio</FieldTitle>
          <div className="h-[19px] text-[10.6px] leading-[20px] text-[#5f6573]">Choose the ratio for various usages.</div>
          <div className="mt-[8px] flex gap-[6px]">
            <Choice label="Original Screen" selected className="w-[97px]" />
            <Choice label="4:3" className="w-[37px]" />
            <Choice label="16:9" className="w-[44px]" />
          </div>
          <div className="h-[45px]" />
          <FieldTitle>Resolution</FieldTitle>
          <div className="h-[19px] text-[10.6px] leading-[20px] text-[#5f6573]">High resolution is better for prints.</div>
          <div className="mt-[8px] flex gap-[6px]">
            <Choice label="1x" selected className="w-[35px]" />
            <Choice label="2x" className="w-[34px]" />
          </div>
          <div className="h-[45px]" />
          <FieldTitle>Map Legend</FieldTitle>
          <div className="mt-[2px] flex items-start">
            <div className="flex h-[16px] w-[16px] items-center justify-center rounded-[1px] bg-[#148a5c]">
              <svg className="h-[9px] w-[11px]" viewBox="0 0 11 9" fill="none" stroke="#fff" strokeWidth="2"><path d="M1 4.6 L4 7.4 L10 1" /></svg>
            </div>
            <span className="ml-[16px] text-[12.5px] leading-[20px] text-[#6a7485]">Add legend on map</span>
          </div>
        </div>
        <div className="flex w-[458px] flex-col items-center pt-[66px]">
          <div className="h-[27px] text-[11px] leading-[21px] tracking-[0.15px] text-[#5a5f69]">1920 x 952</div>
          <Preview />
        </div>
      </div>
      <div className="flex flex-1 items-start justify-end pt-[36px] pr-[96px]">
        <button className="mr-[33px] h-[42px] text-[14.3px] text-[#a0a7b4] [-webkit-text-stroke:0.3px_#a0a7b4]">Cancel</button>
        <button className="h-[42px] w-[160px] rounded-[2px] bg-[#18a872] text-[14.3px] font-semibold text-white">Download</button>
      </div>
    </div>
  );
}

function Annotations() {
  return (
    <svg className="pointer-events-none absolute inset-0 h-[950px] w-[1918px]" viewBox="0 0 1918 950" fill="#ff2600" fontFamily="'Liberation Sans', Arial, sans-serif">
      <path d="M594 516.5 L621.5 523.5 L615.8 530.8 L695.5 597.8 L691.5 602.2 L610.5 535.2 L605 542.5 Z" />
      <path d="M1274.5 553.5 H1279.5 L1280.5 576.3 L1290.5 576 L1279 601.5 L1265.5 577.2 L1275.8 576.8 Z" />
      <text x="701" y="624" fontSize="24" textLength="236">(Optional) Add legend</text>
      <text x="1191.5" y="545" fontSize="24" textLength="168">Click Download</text>
    </svg>
  );
}

export default function App() {
  return (
    <main className="relative h-[950px] w-[1918px] overflow-hidden bg-[#04070b] font-['Open_Sans','Noto_Sans',sans-serif]">
      <BaseMap />
      <div className="relative flex h-[950px] w-[1918px]">
        <div className="flex w-[858px] shrink-0 flex-col">
          <div className="flex">
            <Sidebar />
            <button className="mt-[19px] ml-[8px] flex h-[20px] w-[20px] items-center justify-center bg-[#2d313a]">
              <svg className="h-[9px] w-[6px]" viewBox="0 0 6 9" fill="none" stroke="#0c0e12" strokeWidth="1.5"><path d="M5 0.7 L1.2 4.5 L5 8.3" /></svg>
            </button>
          </div>
          <div className="flex h-[24px] items-center pl-[6px]">
            <svg className="h-[19px] w-[19px]" viewBox="0 0 19 19">
              <circle cx="9.5" cy="9.5" r="9.4" fill="#7b7c7d" />
              <path d="M4.3 14.5 C3.6 10 4.4 7.6 5.8 6.2 C8 4 11.5 4 13.4 6 C15.2 8 15.1 11 13.2 12.9 C11.5 14.6 8.5 15.3 4.3 14.5Z" fill="#080b0f" />
              <path d="M10 5.6 L11 8.2 L13.6 9.2 L11 10.2 L10 12.8 L9 10.2 L6.4 9.2 L9 8.2Z" fill="#7b7c7d" />
            </svg>
            <span className="mb-[2px] ml-[4px] font-['Lato',sans-serif] text-[17px] font-normal tracking-[0.6px] text-[#77797a] [-webkit-text-stroke:0.4px_#77797a]">mapbox</span>
          </div>
        </div>
        <div className="flex flex-1 flex-col">
          <div className="flex h-[759px] justify-end"><RightColumn /></div>
          <TimeWidget />
          <div className="mt-[10px] ml-auto flex h-[19px] w-[273px] items-center bg-[#434546] pt-px pl-[5px] font-['Liberation_Sans',Arial,sans-serif] text-[12px] tracking-[0.1px] whitespace-nowrap text-[#2b2f37]">
            © Mapbox © OpenStreetMap <b className="ml-[6px]">Improve this map</b>
          </div>
        </div>
      </div>
      <div className="absolute inset-0 flex items-start pt-[91px] pl-[478px]">
        <ExportDialog />
      </div>
      <Annotations />
    </main>
  );
}
